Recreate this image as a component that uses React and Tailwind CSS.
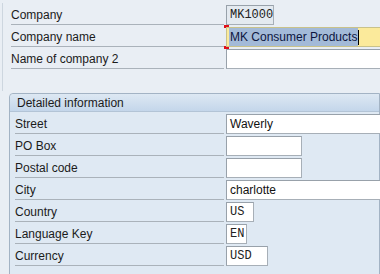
const sans = { fontFamily: '"Liberation Sans", Arial, sans-serif' };
const mono = { fontFamily: '"Liberation Mono", "Courier New", monospace' };

function Field({ width, value, monoText, grey, children }) {
  return (
    <div
      className={`shrink-0 h-[20px] border border-[#a7afb7] border-t-[#98a1aa] border-l-[#98a1aa] flex items-center pl-[3px] overflow-hidden whitespace-nowrap ${
        grey ? "bg-[#e4eaf0]" : "bg-white"
      } ${monoText ? "text-[12px] text-[#222]" : "text-[12px] text-[#111]"}`}
      style={{ width, ...(monoText ? mono : sans) }}
    >
      {children ?? value}
    </div>
  );
}

function Row({ label, labelWidth, children }) {
  return (
    <div className="flex items-end h-[22px]">
      <div
        className="shrink-0 h-[22px] border-b border-[#aab2ba] flex items-center pt-[3px] text-[12px] text-[#1b1b1b]"
        style={{ width: labelWidth }}
      >
        {label}
      </div>
      <div className="shrink-0 ml-[2px] relative">{children}</div>
    </div>
  );
}

export default function App() {
  return (
    <div
      className="w-[380px] h-[274px] overflow-hidden bg-[#e9eef4] pt-[3px]"
      style={sans}
    >
      <div className="ml-[2px] border-l border-[#cdd6df] h-[88px]">
        <div className="pl-[8px]">
          <Row label="Company" labelWidth={213}>
            <Field width={48} monoText grey value="MK1000" />
          </Row>
          <Row label="Company name" labelWidth={213}>
            <span className="absolute left-[-2px] top-[-2px] w-[5px] h-[3px] border-t-2 border-l-2 border-[#e0101a]" />
            <span className="absolute left-[-2px] bottom-[-2px] w-[5px] h-[3px] border-b-2 border-l-2 border-[#e0101a]" />
            <div
              className="w-[160px] h-[20px] bg-[#fbea9b] border border-[#c9c28a] flex items-center pl-[2px] text-[12px] text-[#0d1640] whitespace-nowrap"
              style={sans}
            >
              <span className="bg-[#a3bad8] px-[1px]">MK Consumer Products</span>
              <span className="w-[1px] h-[15px] bg-black" />
            </div>
          </Row>
          <Row label="Name of company 2" labelWidth={213}>
            <Field width={160} value="" />
          </Row>
        </div>
      </div>

      <div className="ml-[9px] mt-[2px] border border-[#a3b3c4] rounded-tl-[4px] bg-[#dfe9f3] h-[200px]">
        <div className="h-[18px] bg-gradient-to-b from-[#dde8f3] to-[#c4d6ea] border-b border-[#b3c4d6] flex items-center pl-[7px] text-[12px] text-[#1b1b1b] rounded-tl-[4px]">
          Detailed information
        </div>
        <div className="pl-[5px]">
          <Row label="Street" labelWidth={209}>
            <Field width={160} value="Waverly" />
          </Row>
          <Row label="PO Box" labelWidth={209}>
            <Field width={76} value="" />
          </Row>
          <Row label="Postal code" labelWidth={209}>
            <Field width={76} value="" />
          </Row>
          <Row label="City" labelWidth={209}>
            <Field width={160} value="charlotte" />
          </Row>
          <Row label="Country" labelWidth={209}>
            <Field width={28} monoText value="US" />
          </Row>
          <Row label="Language Key" labelWidth={209}>
            <Field width={21} monoText value="EN" />
          </Row>
          <Row label="Currency" labelWidth={209}>
            <Field width={42} monoText value="USD" />
          </Row>
        </div>
      </div>
    </div>
  );
}
